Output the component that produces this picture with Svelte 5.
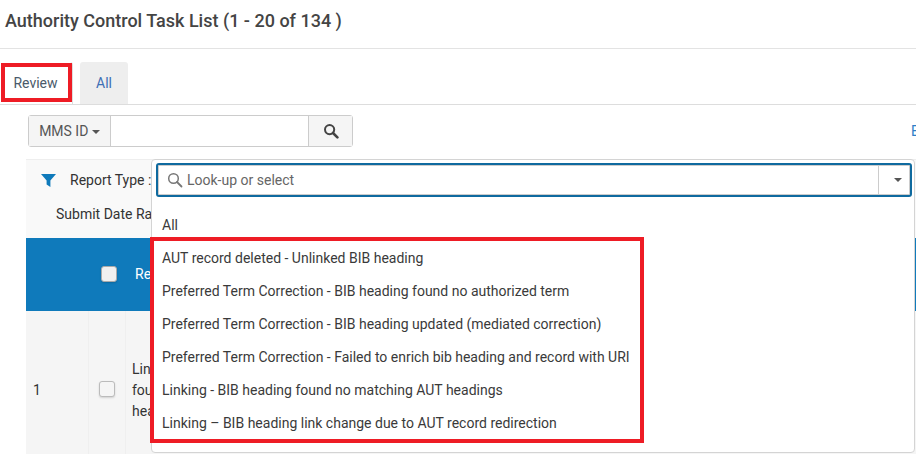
<script>
  const options = [
    "AUT record deleted - Unlinked BIB heading",
    "Preferred Term Correction - BIB heading found no authorized term",
    "Preferred Term Correction - BIB heading updated (mediated correction)",
    "Preferred Term Correction - Failed to enrich bib heading and record with URI",
    "Linking - BIB heading found no matching AUT headings",
    "Linking – BIB heading link change due to AUT record redirection",
  ];
</script>

<div class="page">
  <header><h1>Authority Control Task List (1 - 20 of 134 )</h1></header>

  <nav class="tabs">
    <div class="tab active">Review</div>
    <div class="tab">All</div>
  </nav>

  <div class="search-row">
    <div class="search">
      <button class="scope">MMS ID <span class="caret"></span></button>
      <div class="search-input"></div>
      <button class="go" aria-label="Search">
        <svg width="16" height="16" viewBox="0 0 16 16"><circle cx="6.6" cy="6.6" r="4.6" fill="none" stroke="#444" stroke-width="2"/><path d="M10 10l4.4 4.4" stroke="#444" stroke-width="2.6" stroke-linecap="round"/></svg>
      </button>
    </div>
    <span class="link">E</span>
  </div>

  <section class="filters">
    <div class="filter-line first">
      <svg width="15" height="13" viewBox="0 0 15 13"><path d="M0 0h15L9.4 6.5V13L5.6 10.5v-4z" fill="#0f7abb"/></svg>
      <span>Report Type :</span>
    </div>
    <div class="filter-line second">Submit Date Range</div>
  </section>

  <div class="table">
    <div class="thead">
      <div class="c-num"></div>
      <div class="c-check"><span class="box head"></span></div>
      <div class="c-text">Report</div>
    </div>
    <div class="tbody">
      <div class="c-num">1</div>
      <div class="c-check"><span class="box"></span></div>
      <div class="c-text">Linking - BIB heading<br />found no matching AUT<br />headings</div>
    </div>
  </div>

  <div class="dropdown">
    <div class="combo">
      <svg width="16" height="16" viewBox="0 0 16 16"><circle cx="6.5" cy="6.5" r="4.8" fill="none" stroke="#777" stroke-width="1.5"/><path d="M10 10l4.5 4.5" stroke="#777" stroke-width="1.8" stroke-linecap="round"/></svg>
      <span class="placeholder">Look-up or select</span>
      <div class="combo-toggle"><span class="caret"></span></div>
    </div>
    <ul>
      <li>All</li>
      {#each options as option}
        <li>{option}</li>
      {/each}
    </ul>
  </div>

  <div class="mark mark-tab"></div>
  <div class="mark mark-list"></div>
</div>

<style>
  :global(body) {
    background: #fff;
  }

  .page {
    position: relative;
    width: 916px;
    height: 454px;
    overflow: hidden;
    font-family: Roboto, "Liberation Sans", sans-serif;
    font-size: 14px;
    color: #333;
  }

  header {
    height: 49px;
    box-sizing: border-box;
    border-bottom: 1px solid #e3e3e3;
    padding-left: 5px;
  }
  h1 {
    margin: 0;
    font-size: 18px;
    font-weight: 500;
    line-height: 42px;
    color: #444;
  }

  .tabs {
    display: flex;
    gap: 7px;
    height: 43px;
    margin-top: 13px;
    padding-left: 1px;
    box-sizing: border-box;
    border-bottom: 1px solid #ddd;
  }
  .tab {
    width: 48px;
    height: 42px;
    line-height: 42px;
    text-align: center;
    background: #eee;
    border-radius: 3px 3px 0 0;
    color: #3f6fb5;
  }
  .tab.active {
    width: 72px;
    padding-right: 2px;
    background: #fff;
    border-right: 1px solid #ddd;
    box-sizing: border-box;
    color: #4a5a6a;
  }

  .search-row {
    display: flex;
    justify-content: space-between;
    margin: 10px 0 12px 28px;
  }
  .search {
    display: flex;
    width: 325px;
    height: 32px;
    box-sizing: border-box;
    border: 1px solid #ccc;
    border-radius: 3px;
  }
  .search button {
    border: 0;
    background: #f5f5f5;
    font: inherit;
    color: #555;
    padding: 0;
  }
  .scope {
    width: 82px;
    border-right: 1px solid #ccc !important;
  }
  .search-input {
    flex: 1;
  }
  .go {
    width: 44px;
    border-left: 1px solid #ccc !important;
    display: flex;
    align-items: center;
    justify-content: center;
  }
  .caret {
    display: inline-block;
    width: 0;
    height: 0;
    border: 4px solid transparent;
    border-top-color: #555;
    border-bottom: 0;
    vertical-align: middle;
  }
  .link {
    color: #2f7fc8;
    line-height: 32px;
    margin-right: -3px;
  }

  .filters {
    margin-left: 26px;
    height: 79px;
    background: #f9f9f9;
    border-top: 1px solid #eee;
    box-sizing: border-box;
  }
  .filter-line {
    display: flex;
    align-items: center;
    gap: 14px;
    white-space: nowrap;
  }
  .filter-line.first {
    height: 40px;
    padding-left: 15px;
  }
  .filter-line.second {
    height: 28px;
    padding-left: 30px;
  }

  .table {
    margin-left: 26px;
  }
  .thead,
  .tbody {
    display: flex;
  }
  .thead {
    height: 73px;
    background: #0f7abb;
    color: #fff;
    align-items: center;
  }
  .tbody {
    height: 158px;
    background: #f5f5f5;
    align-items: center;
  }
  .c-num {
    width: 63px;
    padding-left: 7px;
    box-sizing: border-box;
    align-self: stretch;
    display: flex;
    align-items: center;
    border-right: 1px solid #efefef;
  }
  .c-check {
    width: 37px;
    align-self: stretch;
    display: flex;
    align-items: center;
    justify-content: center;
    border-right: 1px solid #efefef;
    box-sizing: border-box;
  }
  .thead .c-num,
  .thead .c-check {
    border-right: 0;
  }
  .thead .c-check {
    padding-left: 3px;
  }
  .thead .c-text {
    padding-left: 9px;
  }
  .c-text {
    padding-left: 6px;
    line-height: 21px;
    white-space: nowrap;
  }
  .box {
    display: block;
    width: 14px;
    height: 14px;
    margin-top: -3px;
    background: #f5f5f5;
    border: 1px solid #bbb;
    border-radius: 3px;
    box-shadow: 0 1px 2px rgba(0, 0, 0, 0.15);
  }
  .box.head {
    margin-top: -1px;
    background: #f0f0f0;
    border-color: #aaa;
  }

  .dropdown {
    position: absolute;
    left: 151px;
    top: 159px;
    width: 764px;
    height: 294px;
    box-sizing: border-box;
    background: #fff;
    border: 1px solid #d4d4d4;
    border-radius: 4px;
  }
  .combo {
    display: flex;
    align-items: center;
    gap: 4px;
    height: 34px;
    box-sizing: border-box;
    margin: 3px 2px 0 4px;
    padding-left: 9px;
    border: 2px solid #0f6a9f;
    border-radius: 3px;
    box-shadow: inset 0 0 0 1px #ccc;
  }
  .placeholder {
    flex: 1;
    color: #666;
  }
  .combo-toggle {
    width: 32px;
    box-sizing: border-box;
    padding-left: 6px;
    align-self: stretch;
    border-left: 1px solid #ccc;
    display: flex;
    align-items: center;
    justify-content: center;
  }
  ul {
    list-style: none;
    margin: 0;
    padding: 12px 0 0 10px;
  }
  li {
    height: 33px;
    line-height: 33px;
    white-space: nowrap;
    color: #3a3a3a;
  }

  .mark {
    position: absolute;
    box-sizing: border-box;
    border: 4px solid #ee1c25;
  }
  .mark-tab {
    left: 1px;
    top: 63px;
    width: 71px;
    height: 39px;
  }
  .mark-list {
    left: 150px;
    top: 237px;
    width: 494px;
    height: 206px;
  }
</style>
